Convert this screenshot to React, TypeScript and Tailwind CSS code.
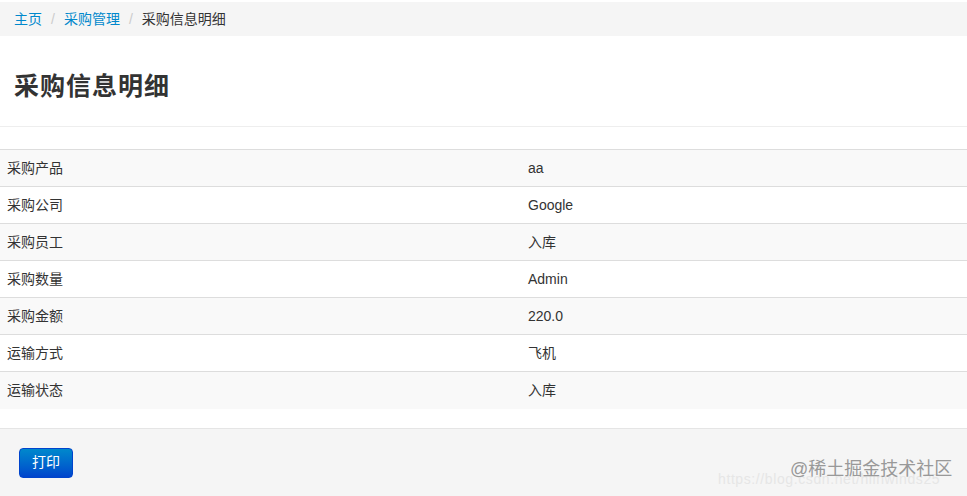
import { FC } from "react";

const rows: [string, string][] = [
  ["采购产品", "aa"],
  ["采购公司", "Google"],
  ["采购员工", "入库"],
  ["采购数量", "Admin"],
  ["采购金额", "220.0"],
  ["运输方式", "飞机"],
  ["运输状态", "入库"],
];

const font = { fontFamily: '"Liberation Sans", Arial, "Noto Sans CJK SC", sans-serif' };

const Breadcrumb: FC = () => (
  <div className="mt-[2px] flex h-[34px] items-center bg-[#f5f5f5] px-[14px] text-[14px]">
    <a className="text-[#0088cc]">主页</a>
    <span className="px-[9px] text-[#cccccc]">/</span>
    <a className="text-[#0088cc]">采购管理</a>
    <span className="px-[9px] text-[#cccccc]">/</span>
    <span className="text-[#333333]">采购信息明细</span>
  </div>
);

export default function App() {
  return (
    <div className="relative h-[496px] w-[967px] overflow-hidden bg-white text-[#333333]" style={font}>
      <Breadcrumb />
      <div className="flex h-[91px] items-center border-b border-[#eeeeee] px-[14px]">
        <h1 className="pt-[12px] text-[25px] font-semibold tracking-[1px] text-[#333333]">采购信息明细</h1>
      </div>
      <table className="mt-[22px] w-full border-collapse text-[14px]">
        <tbody>
          {rows.map(([k, v], i) => (
            <tr key={k} className={i % 2 === 0 ? "bg-[#f9f9f9]" : "bg-white"}>
              <td className="h-[37px] w-[520px] border-t border-[#dddddd] pl-[7px] align-middle">{k}</td>
              <td className="h-[37px] border-t border-[#dddddd] pl-[8px] align-middle">{v}</td>
            </tr>
          ))}
        </tbody>
      </table>
      <div className="mt-[19px] h-[100px] border-t border-[#e5e5e5] bg-[#f5f5f5] px-[19px] pt-[19px]">
        <button
          type="button"
          className="h-[30px] w-[54px] rounded-[4px] border border-[#0044cc] bg-gradient-to-b from-[#0088cc] to-[#0044cc] text-[14px] text-white"
        >
          打印
        </button>
      </div>
      <div className="pointer-events-none absolute left-[718px] top-[469px] text-[14px] tracking-[0.6px] text-[#e6e6e6]">
        https://blog.csdn.net/hlinwinds25
      </div>
      <div className="pointer-events-none absolute left-[790px] top-[456px] text-[18px] text-[#999999]">
        @稀土掘金技术社区
      </div>
    </div>
  );
}
